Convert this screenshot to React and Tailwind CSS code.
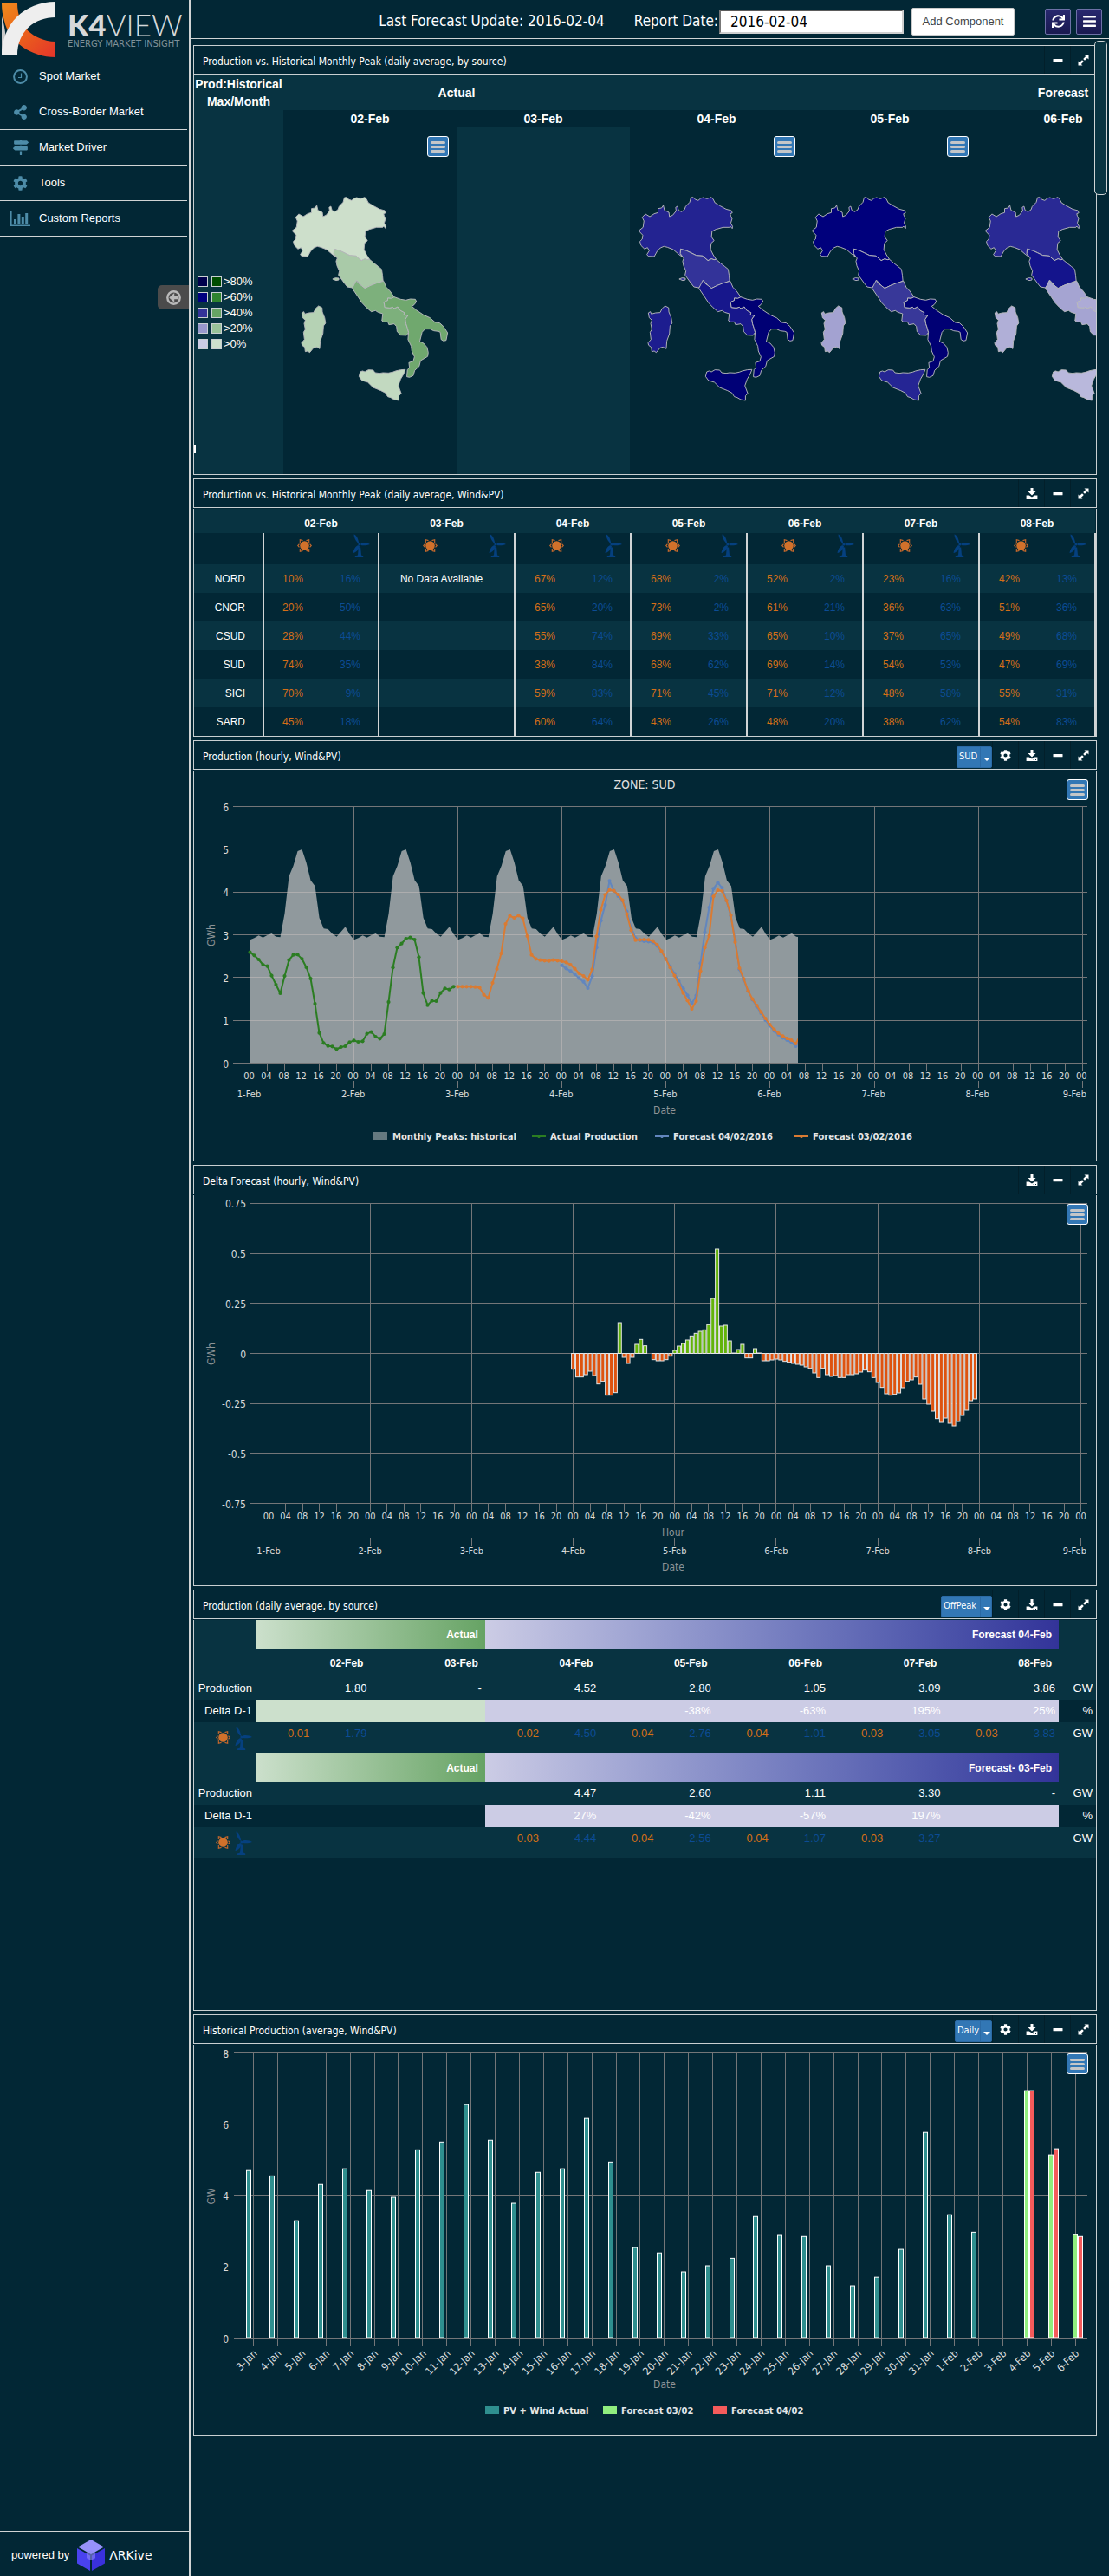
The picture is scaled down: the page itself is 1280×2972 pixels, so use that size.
import React from "react";
import { FaShareAlt, FaMapSigns, FaCog, FaSync, FaBars } from "react-icons/fa";

const GRID = "#747678";

/* ---------- icons ---------- */

function ClockIcon() {
  return (
    <svg viewBox="0 0 17 17" className="w-[17px] h-[17px]" fill="none" stroke="currentColor">
      <circle cx="8.5" cy="8.5" r="7.4" strokeWidth="2" />
      <path d="M9.5 4.5v5H6" strokeWidth="1.2" />
    </svg>
  );
}

function ReportIcon() {
  return (
    <svg viewBox="0 0 23 17" className="w-[23px] h-[17px]" fill="currentColor">
      <path d="M0 0h1.6v15.4H23V17H0zM4 9h3v5H4zM8.4 3h3v11h-3zM12.8 6h3v8h-3zM17.2 2h3v12h-3z" />
    </svg>
  );
}

function DownloadIcon() {
  return (
    <svg viewBox="0 0 14 13" className="w-[14px] h-[13px]" fill="currentColor">
      <path d="M5.5 0h3v4H11.5L7 8.5 2.5 4h3z" />
      <path fillRule="evenodd" d="M0.6 8.5h3.2L7 10.5l3.2-2h3.2V13H0.6zM8.7 11v1h1v-1zM11 11v1h1v-1z" />
    </svg>
  );
}

function MinusIcon() {
  return (
    <svg viewBox="0 0 12 13" className="w-[12px] h-[13px]" fill="currentColor">
      <rect x="0.5" y="5" width="11" height="3.3" rx="0.5" />
    </svg>
  );
}

function ExpandIcon() {
  return (
    <svg viewBox="0 0 13 13" className="w-[13px] h-[13px]" fill="currentColor">
      <path d="M7.5 0.5H12.5V5.5L10.9 3.9 8 6.8 6.2 5 9.1 2.1zM5.5 12.5H0.5V7.5L2.1 9.1 5 6.2 6.8 8 3.9 10.9z" />
    </svg>
  );
}

function SunIcon() {
  return (
    <svg viewBox="0 0 18 18" className="w-[17px] h-[17px]">
      <circle cx="9" cy="9" r="5.6" fill="#d2712b" />
      <g fill="none" stroke="#c4682c" strokeWidth="1.2">
        <path d="M2.6 7 0.8 9l1.8 2M15.4 7l1.8 2-1.8 2" />
        <path d="M3.5 5.2V1.8l3.4 1M14.5 5.2V1.8l-3.4 1M3.5 12.8v3.4l3.4-1M14.5 12.8v3.4l-3.4-1" />
      </g>
    </svg>
  );
}

function WindIcon() {
  return (
    <svg viewBox="0 0 20 27" className="w-[20px] h-[27px]" fill="#05407f">
      <path d="M1.5 0.5C3.5 1 6 4 6.8 8.5L7.4 11 5.6 10C3 7 1.5 3.5 1.5 0.5z" />
      <path d="M9.5 10.5C13 9.5 18 10.5 20 12 17 13.5 12 13.6 9.5 13z" />
      <path d="M6.2 13 8 14.2C7.5 17.5 4 21.5 0.5 22 1 18.5 3 14.5 6.2 13z" />
      <circle cx="7.8" cy="12" r="1.5" />
      <path d="M6.8 15.5h2.4L10 24.5l2.2 1V27H2.8v-1.5L6 24.5z" />
    </svg>
  );
}

function KLogo() {
  return (
    <svg viewBox="0 0 62 64" className="w-[62px] h-[64px] shrink-0" aria-label="K4View">
      <defs>
        <linearGradient id="kFlame" x1="0" y1="0" x2="1" y2="1">
          <stop offset="0" stopColor="#f08a1c" />
          <stop offset="0.5" stopColor="#ea5f1c" />
          <stop offset="1" stopColor="#e4342b" />
        </linearGradient>
      </defs>
      <path d="M0 2H18C18 28 36 45 62 46V64C34 64 8 46 3 22C1 16 0 9 0 2z" fill="url(#kFlame)" />
      <path d="M0 17V62C8 52 4 30 0 17z" fill="#c9c9c9" />
      <path d="M62 0V18C38 18 18 34 18 62H0C0 26 26 0 62 0z" fill="#eeeeee" />
    </svg>
  );
}

function CubeLogo() {
  return (
    <svg viewBox="0 0 34 38" className="w-[34px] h-[38px]">
      <path d="M17 1 32 9.5 17 18 2 9.5z" fill="#9791fb" />
      <path d="M1 11 16 19.5V37L1 28.5z" fill="#4a42ef" />
      <path d="M33 11 18 19.5V37l15-8.5z" fill="#3a31dc" />
      <path d="M17 13l5 2.8v6.4L17 25l-5-2.8v-6.4z" fill="#8f8af5" opacity="0.6" />
    </svg>
  );
}

/* ---------- shared pieces ---------- */

function BurgerButton() {
  return (
    <button
      type="button"
      aria-label="Chart menu"
      className="absolute right-[9px] top-[10px] flex h-6 w-[25px] flex-col items-center justify-center gap-[2px] rounded-[3px] border border-white bg-[#3277b5]"
    >
      <span className="h-[3px] w-[17px] rounded-full bg-[#c4c6c8]" />
      <span className="h-[3px] w-[17px] rounded-full bg-[#c4c6c8]" />
      <span className="h-[3px] w-[17px] rounded-full bg-[#c4c6c8]" />
    </button>
  );
}

function Picker({ label, options, wide }) {
  return (
    <span className="relative mt-[6px] flex h-[25px]">
      <select
        aria-label={label}
        className={
          "h-full appearance-none rounded-[2px] border border-[#2b6aa5] bg-[#3277b5] pl-[2px] text-[11px] text-white " + wide
        }
      >
        {options.map((o) => (
          <option key={o}>{o}</option>
        ))}
      </select>
      <span className="pointer-events-none absolute right-0 top-0 flex h-full w-[14px] items-center justify-center border-l border-[#2b6aa5] pt-1">
        <svg viewBox="0 0 8 4" className="h-1 w-2" fill="#fff">
          <path d="M0 0h8L4 4z" />
        </svg>
      </span>
    </span>
  );
}

function ToolButton({ label, children }) {
  return (
    <button type="button" aria-label={label} className="flex h-8 w-[30px] items-center justify-center border-l border-[#021f2a] text-white">
      {children}
    </button>
  );
}

function Panel({ title, picker, gear, download = true, children }) {
  return (
    <section className="flex flex-col gap-px">
      <header className="flex h-[34px] items-start justify-between border border-[#c9cfd1] pl-[10px] text-[12px] text-white">
        <h2 className="mt-[10px] whitespace-nowrap leading-4">{title}</h2>
        <div className="flex">
          {picker}
          {gear && (
            <ToolButton label="Settings">
              <FaCog className="text-[13px]" />
            </ToolButton>
          )}
          {download && (
            <ToolButton label="Download">
              <DownloadIcon />
            </ToolButton>
          )}
          <ToolButton label="Minimize">
            <MinusIcon />
          </ToolButton>
          <ToolButton label="Expand">
            <ExpandIcon />
          </ToolButton>
        </div>
      </header>
      <div className="relative overflow-hidden border border-t-0 border-[#c9cfd1]">{children}</div>
    </section>
  );
}

/* ---------- Italy maps ---------- */

const REGIONS = {
  nord:
    "537,83 546,91 555,94 563,87 572,84 585,88 600,83 606,90 612,102 630,113 650,124 668,129 671,137 664,140 666,148 671,155 666,172 672,184 671,191 664,183 661,187 640,187 615,194 602,201 600,220 609,233 599,242 597,264 606,282 616,298 609,299 600,296 588,302 570,286 548,284 530,275 515,268 495,262 494,278 499,288 488,280 470,264 450,256 438,253 426,258 415,270 405,288 385,287 380,281 388,268 382,257 372,262 360,250 356,236 364,228 366,214 352,199 367,187 370,165 364,152 375,141 390,150 405,140 418,136 418,122 430,120 436,111 440,128 455,135 457,150 468,145 480,130 478,118 484,114 488,128 498,133 508,126 512,115 526,100 530,84",
  cnor:
    "495,262 515,268 530,275 548,284 570,286 588,302 600,296 609,299 616,298 630,310 645,322 657,332 660,352 662,372 640,382 620,388 600,398 588,388 573,371 566,385 557,396 540,393 530,380 520,366 510,352 513,338 505,320 502,304 506,294 494,278",
  csud:
    "571,370 578,381 588,388 600,398 620,388 640,380 664,373 673,394 686,408 700,428 690,433 678,432 678,440 665,446 668,464 685,466 695,463 700,468 712,462 720,474 735,482 733,490 747,492 738,505 740,520 745,535 749,550 742,561 722,560 710,548 708,530 700,521 682,524 678,514 664,514 658,510 661,486 645,481 636,475 622,479 605,464 590,448 575,425 557,398",
  sud:
    "700,428 722,436 740,439 755,435 772,436 776,444 768,455 760,460 775,473 800,490 822,500 840,516 855,518 868,530 882,552 877,578 868,580 860,575 857,550 850,547 835,545 822,539 805,539 795,550 790,570 787,582 800,588 812,602 816,620 814,634 790,648 785,668 770,682 765,700 752,706 743,704 745,680 752,672 750,655 765,650 769,635 760,615 758,598 747,575 749,550 745,535 740,520 738,505 747,492 733,490 735,482 720,474 712,462 700,468 695,463 685,466 668,464 665,446 678,440 678,432 690,433",
  sici:
    "580,703 584,687 592,684 600,687 612,680 628,681 635,690 650,692 662,690 680,691 695,688 705,684 722,680 738,679 732,695 722,712 714,735 724,762 716,770 716,786 700,783 688,776 678,773 670,760 655,752 628,741 610,723 590,717",
  sard:
    "384,587 394,575 391,550 397,540 393,520 397,508 388,500 385,483 392,479 395,487 410,483 425,482 432,468 442,459 454,465 455,480 463,500 466,519 459,528 457,555 448,580 446,607 435,601 425,604 412,620 405,615 397,617 395,602 386,595",
  elba: "490,366 500,362 511,363 511,369 502,371 495,368",
};

function ItalyMap({ c }) {
  const fills = { ...c, elba: c.cnor };
  return (
    <svg viewBox="0 0 200 400" className="block h-[400px] w-[200px]">
      <g transform="translate(0 53) scale(0.3386 0.3333) translate(-322 0)" stroke="#b9babd" strokeWidth="2.8" strokeLinejoin="round">
        {Object.keys(REGIONS).map((k) => (
          <polygon key={k} points={REGIONS[k]} fill={fills[k]} />
        ))}
      </g>
    </svg>
  );
}

const MAP_DAYS = [
  { day: "02-Feb", c: { nord: "#cddfcb", cnor: "#a9caa8", csud: "#7db07c", sud: "#70a86e", sici: "#c2d9c0", sard: "#b5d2b4" } },
  { day: "03-Feb" },
  { day: "04-Feb", c: { nord: "#232391", cnor: "#333399", csud: "#17178c", sud: "#000074", sici: "#000076", sard: "#1d1d8f" } },
  { day: "05-Feb", c: { nord: "#00007c", cnor: "#00007f", csud: "#383899", sud: "#000074", sici: "#252594", sard: "#a3a2d1" } },
  { day: "06-Feb", c: { nord: "#292994", cnor: "#14148c", csud: "#a5a4d2", sud: "#adabd6", sici: "#b9b8dc", sard: "#b0afd7" } },
];

const MAP_LEGEND = [
  [">80%", "#00004d", "#004d00"],
  [">60%", "#000080", "#2f842e"],
  [">40%", "#333399", "#66a364"],
  [">20%", "#9999cc", "#99c299"],
  [">0%", "#cccce5", "#cce0cc"],
];

function MapsTable() {
  return (
    <table className="w-[1503px] table-fixed border-collapse bg-[#083341] text-[14px] font-bold text-white [font-family:'Liberation_Sans',Arial,sans-serif]">
      <colgroup>
        <col className="w-[103px]" />
        {MAP_DAYS.map((d) => (
          <col key={d.day} className="w-[200px]" />
        ))}
        <col />
      </colgroup>
      <thead>
        <tr className="h-10">
          <th scope="col" className="whitespace-nowrap p-0 leading-5">
            Prod:Historical
            <br />
            Max/Month
          </th>
          <th colSpan={2} className="p-0">Actual</th>
          <th colSpan={4} className="p-0">Forecast</th>
        </tr>
        <tr className="h-5">
          <td className="p-0" />
          {MAP_DAYS.map((d) => (
            <th key={d.day} scope="col" className="bg-[#022735] p-0 leading-5">{d.day}</th>
          ))}
          <td className="p-0" />
        </tr>
      </thead>
      <tbody>
        <tr className="h-[400px]">
          <td className="relative p-0 align-top font-normal">
            <ul className="mt-[169px] pl-1 text-[13px]">
              {MAP_LEGEND.map(([t, a, b]) => (
                <li key={t} className="flex h-[18px] items-center">
                  <span className="mr-1 h-3 w-3 border border-[#c9cfd1]" style={{ background: a }} />
                  <span className="mr-[2px] h-3 w-3 border border-[#c9cfd1]" style={{ background: b }} />
                  {t}
                </li>
              ))}
            </ul>
            <span className="absolute left-0 top-[366px] h-[10px] w-[2px] bg-white" />
          </td>
          {MAP_DAYS.map((d) => (
            <td key={d.day} className={"relative p-0 align-top " + (d.c ? "bg-[#022735]" : "")}>
              {d.c && <ItalyMap c={d.c} />}
              {d.c && <BurgerButton />}
            </td>
          ))}
          <td className="p-0" />
        </tr>
      </tbody>
    </table>
  );
}

/* ---------- peak table ---------- */

const PEAK_DAYS = ["02-Feb", "03-Feb", "04-Feb", "05-Feb", "06-Feb", "07-Feb", "08-Feb"];
const PEAK_ROWS = [
  ["NORD", [10, 16], null, [67, 12], [68, 2], [52, 2], [23, 16], [42, 13]],
  ["CNOR", [20, 50], null, [65, 20], [73, 2], [61, 21], [36, 63], [51, 36]],
  ["CSUD", [28, 44], null, [55, 74], [69, 33], [65, 10], [37, 65], [49, 68]],
  ["SUD", [74, 35], null, [38, 84], [68, 62], [69, 14], [54, 53], [47, 69]],
  ["SICI", [70, 9], null, [59, 83], [71, 45], [71, 12], [48, 58], [55, 31]],
  ["SARD", [45, 18], null, [60, 64], [43, 26], [48, 20], [38, 62], [54, 83]],
];

function PeakTable() {
  return (
    <table className="w-full table-fixed border-collapse text-[12px] text-white [font-family:'Liberation_Sans',Arial,sans-serif]">
      <colgroup>
        <col className="w-[80px]" />
        <col className="w-[66px]" />
        <col className="w-[67px]" />
        <col className="w-[78px]" />
        <col className="w-[79px]" />
        {Array.from({ length: 10 }, (_, i) => (
          <col key={i} />
        ))}
      </colgroup>
      <thead>
        <tr className="h-7 bg-[#083341]">
          <td />
          {PEAK_DAYS.map((d) => (
            <th key={d} scope="col" colSpan={2} className="p-0 pt-[6px] font-bold leading-4">{d}</th>
          ))}
        </tr>
        <tr className="h-9">
          <td className="border-r-2 border-[#d0d4d5] p-0" />
          {PEAK_DAYS.map((d) => (
            <React.Fragment key={d}>
              <td className="p-0 pr-[10px] align-top">
                <div className="flex justify-end pt-[6px]"><SunIcon /></div>
              </td>
              <td className="border-r-2 border-[#d0d4d5] p-0 pr-[9px] align-top">
                <div className="flex justify-end pt-px"><WindIcon /></div>
              </td>
            </React.Fragment>
          ))}
        </tr>
      </thead>
      <tbody>
        {PEAK_ROWS.map(([zone, ...cells], r) => (
          <tr key={zone} className="h-[33px] odd:bg-[#083341]">
            <th scope="row" className="border-r-2 border-[#d0d4d5] p-0 pr-5 text-right font-normal">{zone}</th>
            {cells.map((v, i) =>
              v ? (
                <React.Fragment key={i}>
                  <td className="p-0 pr-5 text-right text-[#d46f17]">{v[0]}%</td>
                  <td className="border-r-2 border-[#d0d4d5] p-0 pr-5 text-right text-[#0c4c94]">{v[1]}%</td>
                </React.Fragment>
              ) : (
                <td key={i} colSpan={2} className="border-r-2 border-[#d0d4d5] p-0 pr-3 text-center">
                  {r === 0 ? "No Data Available" : ""}
                </td>
              )
            )}
          </tr>
        ))}
      </tbody>
    </table>
  );
}

/* ---------- charts ---------- */

const FEB = ["1-Feb", "2-Feb", "3-Feb", "4-Feb", "5-Feb", "6-Feb", "7-Feb", "8-Feb", "9-Feb"];
const HOURS = Array.from({ length: 49 }, (_, i) => i);
const hourLabel = (i) => String((i * 4) % 24).padStart(2, "0");

/* Series levels are plot heights counted downwards at three steps per pixel. */
const level = (v) => v / 3 - 39;

const PEAK_DAY = [703, 697, 688, 695, 687, 681, 692, 694, 612, 483, 447, 396, 390, 436, 497, 517, 627, 664, 666, 682, 692, 675, 658, 684];
const ACTUAL = [
  746, 757, 771, 789, 794, 827, 858, 888, 828, 773, 755, 754, 769, 798, 837, 924, 1025, 1060, 1070, 1072, 1081, 1074, 1071, 1057,
  1051, 1056, 1054, 1028, 1022, 1038, 1045, 1029, 918, 799, 730, 716, 699, 695, 702, 763, 887, 929, 914, 915, 887, 871, 875, 865,
];
const FORECAST_03 = [
  865, 865, 865, 865, 866, 868, 893, 904, 852, 804, 750, 648, 620, 627, 619, 629, 690, 755, 769, 773, 775, 776, 773, 775,
  777, 781, 789, 803, 819, 828, 841, 805, 691, 599, 547, 530, 533, 546, 566, 614, 670, 704, 703, 702, 703, 707, 720, 742,
  769, 799, 827, 857, 887, 913, 942, 915, 811, 730, 689, 553, 531, 534, 567, 618, 711, 801, 838, 880, 908, 930, 953, 975,
  996, 1013, 1026, 1036, 1044, 1050, 1062, 1034,
];
const FORECAST_04 = [
  791, 802, 811, 822, 836, 848, 870, 829, 730, 637, 582, 499, 533, 552, 568, 605, 660, 697, 705, 708, 709, 712, 724, 744,
  769, 795, 820, 846, 871, 895, 923, 896, 784, 677, 591, 526, 505, 523, 567, 620, 704, 805, 842, 880, 910, 934, 957, 981,
  1000, 1018, 1031, 1042, 1050, 1058, 1071, 1048,
];

function Series({ data, start, color }) {
  const pts = data.map((v, i) => [64.5 + (start + i) * 5, level(v)]);
  return (
    <g clipPath="url(#hourlyClip)">
      <polyline points={pts.map((p) => p.join(",")).join(" ")} fill="none" stroke={color} strokeWidth="2" strokeLinejoin="round" />
      {pts.map(([x, y]) => (
        <circle key={x} cx={x} cy={y} r="2.1" fill={color} />
      ))}
    </g>
  );
}

function AxisTitle({ x, y, children, rotate }) {
  return (
    <text x={x} y={y} textAnchor="middle" fontSize="12" fill="#8d9396" transform={rotate ? `rotate(-90 ${x} ${y})` : undefined}>
      {children}
    </text>
  );
}

function LegendText({ x, children }) {
  return (
    <text x={x} y="426" fontSize="10" fontWeight="bold" fill="#e4e6e7" className="[font-family:'DejaVu_Sans',Verdana,sans-serif]">
      {children}
    </text>
  );
}

function HourlyChart() {
  const x = (h) => 64.5 + h * 5.004;
  const y = (v) => 337.5 - v * 49.333;
  const area = Array.from({ length: 128 }, (_, h) => `${x(h)},${level(PEAK_DAY[h % 24])}`).join(" ");
  return (
    <svg viewBox="0 0 1041 450" className="block h-auto w-full" fill="#d9dcdd">
      <defs>
        <clipPath id="hourlyClip">
          <rect x="60" y="30" width="637" height="310" />
        </clipPath>
      </defs>
      <text x="520" y="21" textAnchor="middle" fontSize="14" fill="#e0e0e0">ZONE: SUD</text>
      {[0, 1, 2, 3, 4, 5, 6].map((v) => (
        <g key={v}>
          <path d={`M45 ${Math.floor(y(v)) + 0.5}H1031`} stroke={GRID} />
          <text x="40" y={y(v) + 5} textAnchor="end" fontSize="12">{v}</text>
        </g>
      ))}
      {FEB.map((d, i) => {
        const gx = Math.floor(x(i * 24)) + 0.5;
        return <path key={d} d={`M${gx} 41V347M${gx} 358V366`} stroke={GRID} />;
      })}
      {HOURS.map((i) => (
        <path key={i} d={`M${Math.floor(x(i * 4)) + 0.5} 337V347`} stroke={GRID} />
      ))}
      <polygon points={`64.5,337 ${area} ${x(127)},337`} fill="#c0c0c0" fillOpacity="0.75" clipPath="url(#hourlyClip)" />
      <Series data={ACTUAL} start={0} color="#2b7d22" />
      <Series data={FORECAST_04} start={72} color="#6286be" />
      <Series data={FORECAST_03} start={48} color="#d97b33" />
      {HOURS.map((i) => (
        <text key={i} x={x(i * 4) - 1} y="356" textAnchor="middle" fontSize="11">{hourLabel(i)}</text>
      ))}
      {FEB.map((d, i) => (
        <text key={d} x={i === 8 ? 1030 : x(i * 24) - 1} y="377" textAnchor={i === 8 ? "end" : "middle"} fontSize="11">{d}</text>
      ))}
      <AxisTitle x={24} y={190} rotate>GWh</AxisTitle>
      <AxisTitle x={543} y={396}>Date</AxisTitle>
      <rect x="207" y="417" width="16" height="9" fill="#657980" />
      <LegendText x={229}>Monthly Peaks: historical</LegendText>
      <g stroke="#2b7d22" fill="#2b7d22"><path d="M390 422H406" strokeWidth="2" /><circle cx="398" cy="422" r="1.6" /></g>
      <LegendText x={411}>Actual Production</LegendText>
      <g stroke="#6286be" fill="#6286be"><path d="M532 422H548" strokeWidth="2" /><circle cx="540" cy="422" r="1.6" /></g>
      <LegendText x={553}>Forecast 04/02/2016</LegendText>
      <g stroke="#d97b33" fill="#d97b33"><path d="M693 422H709" strokeWidth="2" /><circle cx="701" cy="422" r="1.6" /></g>
      <LegendText x={714}>Forecast 03/02/2016</LegendText>
    </svg>
  );
}

const DELTA = [
  719, 746, 746, 738, 726, 741, 770, 761, 809, 809, 800, 558, 678, 699, 678, 633, 616, 638, null, 686, 690, 690, 686, 674,
  654, 639, 630, 618, 604, 595, 588, 583, 565, 474, 303, 570, 567, 621, 663, 651, 633, 680, 680, 648, 663, 690, 690, 687,
  684, 687, 692, 695, 699, 702, 705, 711, 716, 732, 748, 716, 738, 744, 741, 748, 748, 738, 738, 735, 729, 722, 728, 748,
  765, 782, 804, 809, 806, 801, 783, 761, 756, 746, 771, 822, 840, 864, 890, 903, 888, 906, 915, 900, 879, 861, 828, 822,
];

function DeltaChart() {
  const x = (h) => 86 + h * 4.883;
  const y = (v) => 182.5 - v * 230.67;
  return (
    <svg viewBox="0 0 1041 450" className="block h-auto w-full" fill="#d9dcdd">
      {[0.75, 0.5, 0.25, 0, -0.25, -0.5, -0.75].map((v) => (
        <g key={v}>
          <path d={`M65 ${Math.floor(y(v)) + 0.5}H1031`} stroke={GRID} />
          <text x="60" y={y(v) + 5} textAnchor="end" fontSize="12">{v}</text>
        </g>
      ))}
      {HOURS.map((i) => (
        <path key={i} d={`M${Math.floor(x(i * 4)) + 0.5} 355V365`} stroke={GRID} />
      ))}
      {FEB.map((d, i) => {
        const gx = Math.floor(x(i * 24)) + 0.5;
        return <path key={d} d={`M${gx} 9V355M${gx} 395V405`} stroke={GRID} />;
      })}
      {DELTA.map((v, i) => {
        if (v === null) return null;
        const end = v / 3 - 39;
        const up = end < 182.5;
        return (
          <rect
            key={i}
            x={x(72 + i) - 2}
            width="4"
            y={up ? end : 182.5}
            height={Math.abs(end - 182.5)}
            fill={up ? "#62b30a" : "#dd5310"}
            stroke="#e6e6e6"
            strokeWidth="1"
          />
        );
      })}
      {HOURS.map((i) => (
        <text key={i} x={x(i * 4)} y="374" textAnchor="middle" fontSize="11">{hourLabel(i)}</text>
      ))}
      {FEB.map((d, i) => (
        <text key={d} x={i === 8 ? 1030 : x(i * 24)} y="414" textAnchor={i === 8 ? "end" : "middle"} fontSize="11">{d}</text>
      ))}
      <AxisTitle x={24} y={183} rotate>GWh</AxisTitle>
      <AxisTitle x={553} y={393}>Hour</AxisTitle>
      <AxisTitle x={553} y={433}>Date</AxisTitle>
    </svg>
  );
}

const HIST = [
  4.7, 4.55, 3.29, 4.31, 4.75, 4.14, 3.95, 5.28, 5.5, 6.55, 5.55, 3.78, 4.65, 4.75, 6.16, 4.94, 2.54, 2.39, 1.86, 2.03, 2.24,
  3.41, 2.88, 2.85, 2.03, 1.47, 1.71, 2.49, 5.77, 3.46, 2.97,
];
const HIST_FC = [[32, 6.94, 6.94], [33, 5.14, 5.31], [34, 2.9, 2.85]];
const HIST_DAYS = Array.from({ length: 35 }, (_, i) => (i < 29 ? `${i + 3}-Jan` : `${i - 28}-Feb`));

function HistoryChart() {
  const x = (i) => 68.5 + i * 27.9;
  const y = (v) => 338.5 - v * 41.125;
  const bar = (key, cx, v, fill) => (
    <rect key={key} x={cx - 2.5} width="5" y={y(v)} height={338 - y(v)} fill={fill} stroke="#ffffff" strokeWidth="1" />
  );
  return (
    <svg viewBox="0 0 1041 450" className="block h-auto w-full" fill="#d9dcdd">
      {[0, 2, 4, 6, 8].map((v) => (
        <g key={v}>
          <path d={`M46 ${Math.floor(y(v)) + 0.5}H1031`} stroke={GRID} />
          <text x="40" y={y(v) + 5} textAnchor="end" fontSize="12">{v}</text>
        </g>
      ))}
      {HIST_DAYS.map((d, i) => (
        <path key={d} d={`M${Math.floor(x(i)) + 0.5} 9V348`} stroke={GRID} />
      ))}
      {HIST.map((v, i) => bar(i, Math.round(x(i)) - 6, v, "#2f8f8f"))}
      {HIST_FC.map(([i, a, b]) => (
        <g key={i}>
          {bar("a", Math.round(x(i)), a, "#90ee7e")}
          {bar("b", Math.round(x(i)) + 6, b, "#f45b5b")}
        </g>
      ))}
      <path d="M46 338.5H1031" stroke={GRID} />
      {HIST_DAYS.map((d, i) => (
        <text key={d} x={x(i) + 5} y="357" textAnchor="end" fontSize="12" transform={`rotate(-45 ${x(i) + 5} 357)`}>{d}</text>
      ))}
      <AxisTitle x={24} y={175} rotate>GW</AxisTitle>
      <AxisTitle x={543} y={396}>Date</AxisTitle>
      <rect x="336" y="417" width="16" height="9" fill="#2f8f8f" />
      <LegendText x={357}>PV + Wind Actual</LegendText>
      <rect x="472" y="417" width="16" height="9" fill="#90ee7e" />
      <LegendText x={493}>Forecast 03/02</LegendText>
      <rect x="599" y="417" width="16" height="9" fill="#f45b5b" />
      <LegendText x={620}>Forecast 04/02</LegendText>
    </svg>
  );
}

/* ---------- daily source table ---------- */

const SOURCE_DAYS = ["02-Feb", "03-Feb", "04-Feb", "05-Feb", "06-Feb", "07-Feb", "08-Feb"];
const BLOCKS = [
  {
    label: "Forecast 04-Feb",
    days: true,
    prod: ["1.80", "-", "4.52", "2.80", "1.05", "3.09", "3.86"],
    delta: ["", "", "", "-38%", "-63%", "195%", "25%"],
    tint: "bg-[#cce0cc]",
    src: [["0.01", "1.79"], ["", ""], ["0.02", "4.50"], ["0.04", "2.76"], ["0.04", "1.01"], ["0.03", "3.05"], ["0.03", "3.83"]],
  },
  {
    label: "Forecast- 03-Feb",
    days: false,
    prod: ["", "", "4.47", "2.60", "1.11", "3.30", "-"],
    delta: ["", "", "27%", "-42%", "-57%", "197%", ""],
    tint: "",
    src: [["", ""], ["", ""], ["0.03", "4.44"], ["0.04", "2.56"], ["0.04", "1.07"], ["0.03", "3.27"], ["", ""]],
  },
];

function SourceTable() {
  return (
    <div className="min-h-[450px]">
      <table className="w-full table-fixed border-collapse text-right text-[13px] text-white [font-family:'Liberation_Sans',Arial,sans-serif]">
        <colgroup>
          <col className="w-[71px]" />
          {Array.from({ length: 14 }, (_, i) => (
            <col key={i} />
          ))}
          <col className="w-[43px]" />
        </colgroup>
        {BLOCKS.map((b) => (
          <tbody key={b.label} className="bg-[#083341]">
            <tr className="h-[33px] text-[12px]">
              <td />
              <th colSpan={4} className="bg-linear-to-r from-[#cce0cc] to-[#66a364] p-0 pr-2 text-right">Actual</th>
              <th colSpan={10} className="bg-linear-to-r from-[#cccce5] to-[#333399] p-0 pr-2 text-right">{b.label}</th>
              <td />
            </tr>
            {b.days && (
              <tr className="h-[33px] text-[12px]">
                <td />
                {SOURCE_DAYS.map((d) => (
                  <th key={d} scope="col" colSpan={2} className="p-0 pr-2 text-right">{d}</th>
                ))}
                <td />
              </tr>
            )}
            <tr className="h-[26px]">
              <th scope="row" className="p-0 pr-1 text-right font-normal">Production</th>
              {b.prod.map((v, i) => (
                <td key={i} colSpan={2} className="p-0 pr-1">{v}</td>
              ))}
              <td className="p-0 pr-1">GW</td>
            </tr>
            <tr className="h-[26px] bg-[#022735]">
              <th scope="row" className="whitespace-nowrap p-0 pr-1 text-right font-normal">Delta D-1</th>
              {b.delta.map((v, i) => (
                <td key={i} colSpan={2} className={"p-0 pr-1 " + (i < 2 ? b.tint : "bg-[#cccce5]")}>{v}</td>
              ))}
              <td className="p-0 pr-1">%</td>
            </tr>
            <tr className="h-9">
              <td className="p-0 pr-1 align-top">
                <div className="flex justify-end gap-[5px] pt-[5px]">
                  <div className="pt-1"><SunIcon /></div>
                  <WindIcon />
                </div>
              </td>
              {b.src.map(([s, w], i) => (
                <React.Fragment key={i}>
                  <td className="p-0 pr-1 align-top leading-[26px] text-[#d46f17]">{s}</td>
                  <td className="p-0 pr-1 align-top leading-[26px] text-[#0c4c94]">{w}</td>
                </React.Fragment>
              ))}
              <td className="p-0 pr-1 align-top leading-[26px]">GW</td>
            </tr>
          </tbody>
        ))}
      </table>
    </div>
  );
}

/* ---------- page ---------- */

const NAV = [
  ["Spot Market", <ClockIcon />],
  ["Cross-Border Market", <FaShareAlt className="text-[17px]" />],
  ["Market Driver", <FaMapSigns className="text-[18px]" />],
  ["Tools", <FaCog className="text-[17px]" />],
  ["Custom Reports", <ReportIcon />],
];

function Sidebar() {
  return (
    <aside className="flex w-[220px] shrink-0 flex-col border-r-2 border-[#d0d4d5] text-[13px] [font-family:'Liberation_Sans',Arial,sans-serif]">
      <a href="#home" className="flex h-[68px] gap-[14px] pl-[2px] pt-[2px]">
        <KLogo />
        <span className="flex flex-col pt-2 text-[#d6d9da]">
          <span className="whitespace-nowrap text-[35px] leading-[36px] [font-family:Lato,sans-serif]">
            <b className="font-black">K4</b>
            <span className="font-light">VIEW</span>
          </span>
          <span className="whitespace-nowrap text-[10px] leading-[9px] text-[#7f9199] [font-family:'DejaVu_Sans',sans-serif]">ENERGY MARKET INSIGHT</span>
        </span>
      </a>
      <nav className="mr-[2px]">
        {NAV.map(([label, icon]) => (
          <a key={label} href={"#" + label.toLowerCase().replace(" ", "-")} className="flex h-[41px] items-center border-b border-[#d0d4d5] pl-3 text-white">
            <span className="mr-[10px] flex w-[23px] justify-center text-[#4d8ca8]">{icon}</span>
            {label}
          </a>
        ))}
      </nav>
      <button type="button" aria-label="Collapse sidebar" className="mt-14 flex h-7 w-9 items-center justify-center self-end rounded-l-[5px] bg-[#4b4b4b] text-[#b9b9b9]">
        <svg viewBox="0 0 17 17" className="h-[17px] w-[17px]">
          <circle cx="8.5" cy="8.5" r="7.2" fill="none" stroke="currentColor" strokeWidth="2.4" />
          <path d="M9.2 2.9v3.9h4.3v3.4H9.2v3.9L3.2 8.5z" fill="currentColor" />
        </svg>
      </button>
      <footer className="mt-auto flex h-[52px] items-center border-t border-[#d0d4d5] pl-[13px] pt-[3px] text-white">
        powered by
        <span className="ml-2"><CubeLogo /></span>
        <span className="ml-1 text-[14px] [font-family:'DejaVu_Sans',sans-serif]">ΛRKive</span>
      </footer>
    </aside>
  );
}

export default function App() {
  return (
    <div className="flex min-h-screen bg-[#022735] [font-family:'DejaVu_Sans_Condensed',Tahoma,'Open_Sans',sans-serif]">
      <Sidebar />
      <div className="relative min-w-0 flex-1">
        <header className="flex h-[45px] items-center justify-end border-b border-[#d0d4d5] pr-2 pt-[5px] text-[17px] text-white">
          <span className="mr-[34px] whitespace-nowrap">Last Forecast Update: 2016-02-04</span>
          <label htmlFor="report-date" className="whitespace-nowrap">Report Date:</label>
          <input
            id="report-date"
            type="text"
            defaultValue="2016-02-04"
            className="ml-px h-7 w-[213px] border-2 border-[#d0d0d0] border-t-[#5b5b5b] border-l-[#777] bg-white pl-[11px] text-black outline-none"
          />
          <button type="button" className="ml-[9px] h-8 w-[119px] rounded-[2px] border border-[#c9c9c9] bg-white text-[13px] text-[#444] [font-family:'Liberation_Sans',Arial,sans-serif]">
            Add Component
          </button>
          <button type="button" aria-label="Refresh" className="ml-[35px] flex h-[30px] w-[30px] items-center justify-center rounded-[2px] border border-[#6d70a6] bg-linear-to-b from-[#28286f] to-[#191950]">
            <FaSync className="text-[15px]" />
          </button>
          <button type="button" aria-label="Menu" className="ml-[6px] flex h-[30px] w-[30px] items-center justify-center rounded-[2px] border border-[#6d70a6] bg-linear-to-b from-[#28286f] to-[#191950]">
            <FaBars className="text-[17px]" />
          </button>
        </header>
        <main className="flex flex-col gap-1 pb-4 pl-[3px] pr-[14px] pt-[7px]">
          <Panel title="Production vs. Historical Monthly Peak (daily average, by source)" download={false}>
            <MapsTable />
          </Panel>
          <Panel title="Production vs. Historical Monthly Peak (daily average, Wind&PV)">
            <PeakTable />
          </Panel>
          <Panel
            title="Production (hourly, Wind&PV)"
            gear
            picker={<Picker label="Zone" options={["SUD", "NORD", "CNOR", "CSUD", "SICI", "SARD"]} wide="w-[41px]" />}
          >
            <HourlyChart />
            <BurgerButton />
          </Panel>
          <Panel title="Delta Forecast (hourly, Wind&PV)">
            <DeltaChart />
            <BurgerButton />
          </Panel>
          <Panel
            title="Production (daily average, by source)"
            gear
            picker={<Picker label="Load band" options={["OffPeak", "Peak", "Base"]} wide="w-[59px]" />}
          >
            <SourceTable />
          </Panel>
          <Panel
            title="Historical Production (average, Wind&PV)"
            gear
            picker={<Picker label="Resolution" options={["Daily", "Weekly"]} wide="w-[43px]" />}
          >
            <HistoryChart />
            <BurgerButton />
          </Panel>
        </main>
        <div className="absolute right-[2px] top-[47px] h-[178px] w-[15px] rounded-[5px] border border-[#d0d4d5] bg-[#083341]" />
      </div>
    </div>
  );
}
